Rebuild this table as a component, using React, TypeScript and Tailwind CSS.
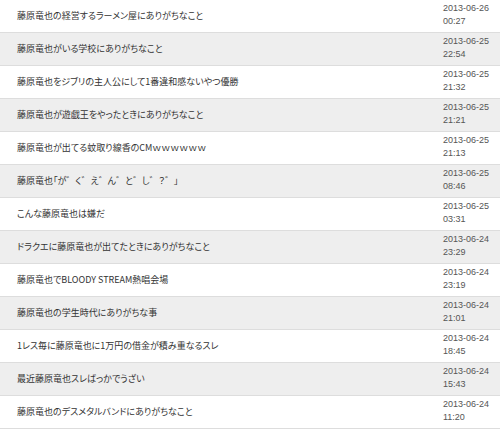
import React from "react";

const rows: [string, string, string][] = [
  ["藤原竜也の経営するラーメン屋にありがちなこと", "2013-06-26", "00:27"],
  ["藤原竜也がいる学校にありがちなこと", "2013-06-25", "22:54"],
  ["藤原竜也をジブリの主人公にして1番違和感ないやつ優勝", "2013-06-25", "21:32"],
  ["藤原竜也が遊戯王をやったときにありがちなこと", "2013-06-25", "21:21"],
  ["藤原竜也が出てる蚊取り線香のCMｗｗｗｗｗｗ", "2013-06-25", "21:13"],
  ["藤原竜也「が゛く゛え゛ん゛と゛し゛？゛」", "2013-06-25", "08:46"],
  ["こんな藤原竜也は嫌だ", "2013-06-25", "03:31"],
  ["ドラクエに藤原竜也が出てたときにありがちなこと", "2013-06-24", "23:29"],
  ["藤原竜也でBLOODY STREAM熱唱会場", "2013-06-24", "23:19"],
  ["藤原竜也の学生時代にありがちな事", "2013-06-24", "21:01"],
  ["1レス毎に藤原竜也に1万円の借金が積み重なるスレ", "2013-06-24", "18:45"],
  ["最近藤原竜也スレばっかでうざい", "2013-06-24", "15:43"],
  ["藤原竜也のデスメタルバンドにありがちなこと", "2013-06-24", "11:20"],
];

export default function App() {
  return (
    <div className="w-[500px] h-[430px] overflow-hidden bg-white">
      {rows.map(([title, d, t], i) => (
        <div
          key={i}
          className={`flex h-[33px] border-b border-[#dddddd] ${i % 2 === 1 ? "bg-[#eeeeee]" : "bg-white"}`}
        >
          <div
            className="flex-1 min-w-0 flex items-center pl-[17px] text-[9px] text-[#333333] whitespace-nowrap"
            style={{ fontFamily: '"Noto Sans CJK JP", "Liberation Sans", sans-serif', fontFeatureSettings: '"palt"' }}
          >
            {title}
          </div>
          <div
            className="w-[57px] shrink-0 pt-[2px] text-[9px] leading-[13px] text-[#555555] whitespace-nowrap"
            style={{ fontFamily: '"Liberation Sans", sans-serif' }}
          >
            <div>{d}</div>
            <div>{t}</div>
          </div>
        </div>
      ))}
    </div>
  );
}
